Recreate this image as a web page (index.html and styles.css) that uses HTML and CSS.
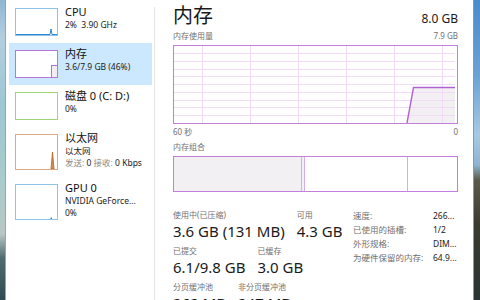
FILE: index.html
```html
<!DOCTYPE html>
<html lang="zh-CN">
<head>
    <meta charset="UTF-8">
    <title>任务管理器 - 内存</title>
    <link rel="stylesheet" href="styles.css">
</head>
<body>
    <div class="desk desk-left"></div>

    <div class="window">
        <aside class="sidebar">
            <div class="item">
                <div class="thumb thumb-cpu">
                    <svg width="41" height="26" viewBox="0 0 41 26">
                        <polyline points="0,25.5 34,25.5 35,20 36,25.5 41,25.5" fill="none" stroke="#2b8ad0" stroke-width="1"/>
                    </svg>
                </div>
                <div class="info">
                    <div class="name">CPU</div>
                    <div class="sub">2%&nbsp; 3.90 GHz</div>
                </div>
            </div>

            <div class="item selected">
                <div class="thumb thumb-mem">
                    <svg width="41" height="26" viewBox="0 0 41 26">
                        <rect x="35.5" y="14.5" width="6" height="12" fill="#f3eef5" stroke="#b56fd0" stroke-width="1"/>
                    </svg>
                </div>
                <div class="info">
                    <div class="name">内存</div>
                    <div class="sub">3.6/7.9 GB (46%)</div>
                </div>
            </div>

            <div class="item">
                <div class="thumb thumb-disk"></div>
                <div class="info">
                    <div class="name">磁盘 0 (C: D:)</div>
                    <div class="sub">0%</div>
                </div>
            </div>

            <div class="item tall">
                <div class="thumb thumb-net">
                    <svg width="41" height="34" viewBox="0 0 41 34">
                        <polygon points="35,34 36.5,17 38,34" fill="#d98a4a" stroke="#b8621c" stroke-width="0.8"/>
                    </svg>
                </div>
                <div class="info">
                    <div class="name">以太网</div>
                    <div class="sub">以太网</div>
                    <div class="sub"><span class="muted">发送:</span> 0 <span class="muted">接收:</span> 0 Kbps</div>
                </div>
            </div>

            <div class="item tall">
                <div class="thumb thumb-gpu">
                    <svg width="41" height="34" viewBox="0 0 41 34">
                        <rect x="34.5" y="32.5" width="1.5" height="1.5" fill="#2b8ad0"/>
                    </svg>
                </div>
                <div class="info">
                    <div class="name">GPU 0</div>
                    <div class="sub">NVIDIA GeForce...</div>
                    <div class="sub">0%</div>
                </div>
            </div>
        </aside>

        <div class="divider"></div>

        <main class="main">
            <div class="head">
                <h1>内存</h1>
                <span class="total">8.0 GB</span>
            </div>

            <div class="row-labels">
                <span>内存使用量</span>
                <span>7.9 GB</span>
            </div>

            <div class="chart">
                <svg width="281" height="77" viewBox="0 0 281 77">
                    <polygon points="233,77 239.5,41.5 281,41.5 281,77" fill="#f2f0f3"/>
                    <g stroke="#f0dcf6" stroke-width="1">
                        <line x1="0" y1="7.5" x2="281" y2="7.5"/>
                        <line x1="0" y1="15.5" x2="281" y2="15.5"/>
                        <line x1="0" y1="23.5" x2="281" y2="23.5"/>
                        <line x1="0" y1="30.5" x2="281" y2="30.5"/>
                        <line x1="0" y1="38.5" x2="281" y2="38.5"/>
                        <line x1="0" y1="46.5" x2="281" y2="46.5"/>
                        <line x1="0" y1="54.5" x2="281" y2="54.5"/>
                        <line x1="0" y1="61.5" x2="281" y2="61.5"/>
                        <line x1="0" y1="69.5" x2="281" y2="69.5"/>
                        <line x1="28.5" y1="0" x2="28.5" y2="77"/>
                        <line x1="76.5" y1="0" x2="76.5" y2="77"/>
                        <line x1="124.5" y1="0" x2="124.5" y2="77"/>
                        <line x1="172.5" y1="0" x2="172.5" y2="77"/>
                        <line x1="220.5" y1="0" x2="220.5" y2="77"/>
                        <line x1="268.5" y1="0" x2="268.5" y2="77"/>
                    </g>
                    <polyline points="233,77 239.5,41.5 281,41.5" fill="none" stroke="#b163d3" stroke-width="1.4"/>
                </svg>
            </div>

            <div class="row-labels axis">
                <span>60 秒</span>
                <span>0</span>
            </div>

            <div class="caption">内存组合</div>

            <div class="compose">
                <div class="seg seg-used"></div>
                <div class="seg seg-mod"></div>
                <div class="seg seg-standby"></div>
                <div class="seg seg-free"></div>
            </div>

            <div class="stats">
                <div class="stats-left">
                    <div class="stat-row">
                        <div class="stat">
                            <div class="label">使用中(已压缩)</div>
                            <div class="value">3.6 GB (131 MB)</div>
                        </div>
                        <div class="stat">
                            <div class="label">可用</div>
                            <div class="value">4.3 GB</div>
                        </div>
                    </div>
                    <div class="stat-row">
                        <div class="stat">
                            <div class="label">已提交</div>
                            <div class="value">6.1/9.8 GB</div>
                        </div>
                        <div class="stat">
                            <div class="label">已缓存</div>
                            <div class="value">3.0 GB</div>
                        </div>
                    </div>
                    <div class="stat-row">
                        <div class="stat">
                            <div class="label">分页缓冲池</div>
                            <div class="value">262 MB</div>
                        </div>
                        <div class="stat">
                            <div class="label">非分页缓冲池</div>
                            <div class="value">247 MB</div>
                        </div>
                    </div>
                </div>

                <div class="stats-right">
                    <span class="key">速度:</span><span class="val">266...</span>
                    <span class="key">已使用的插槽:</span><span class="val">1/2</span>
                    <span class="key">外形规格:</span><span class="val">DIM...</span>
                    <span class="key">为硬件保留的内存:</span><span class="val">64.9...</span>
                </div>
            </div>
        </main>
    </div>

    <div class="desk desk-right"></div>
</body>
</html>
```

FILE: styles.css
```css
body {
    margin: 0;
    padding: 0;
    width: 480px;
    height: 300px;
    overflow: hidden;
    display: flex;
    font-family: "Noto Sans", "Noto Sans CJK SC", sans-serif;
    color: #1a1a1a;
    background-color: #fff;
}

/* desktop peeking out on both sides */
.desk {
    flex: none;
    height: 300px;
}

.desk-left {
    width: 5px;
    background: linear-gradient(to bottom, #8fb6d3 0%, #b3cde0 12%, #9ec7d3 35%, #a9cccb 60%, #b7c7c4 78%, #4f6b70 86%, #2f4a52 100%);
}

.desk-right {
    width: 6px;
    background: linear-gradient(to bottom, #4a8bcb 0%, #6aa2d6 25%, #a8c9e2 45%, #8fb3cf 55%, #5b5a4a 60%, #3a3a30 75%, #2c3434 100%);
}

.window {
    flex: 1;
    display: flex;
    background-color: #fff;
    border-left: 1px solid #9aa3a6;
    border-right: 1px solid #8a96a0;
}

/* left list of devices */
.sidebar {
    width: 143px;
    margin-left: 3px;
    padding-top: 1px;
}

.item {
    display: flex;
    align-items: flex-start;
    padding: 4px 0 7px 6px;
}

.item.selected {
    background-color: #cce8ff;
}

.thumb {
    flex: none;
    width: 41px;
    height: 26px;
    margin-top: 3px;
    background-color: #fff;
    border: 1px solid #8fc2e6;
}

.thumb svg {
    display: block;
}

.item.tall .thumb {
    height: 34px;
}

.thumb-mem {
    border-color: #b877d2;
}

.thumb-disk {
    border-color: #9fd47c;
}

.thumb-net {
    border-color: #daa882;
}

.info {
    margin-left: 7px;
    white-space: nowrap;
}

.name {
    font-size: 11px;
    line-height: 14px;
    color: #111;
}

.sub {
    font-size: 8.5px;
    line-height: 12px;
    color: #222;
}

.muted {
    color: #8a8a8a;
}

.divider {
    flex: none;
    width: 1px;
    margin: 7px 0 0 2px;
    background-color: #e6e6e6;
}

/* memory details */
.main {
    flex: 1;
    padding: 2px 15px 0 18px;
}

.head {
    display: flex;
    justify-content: space-between;
    align-items: baseline;
}

.head h1 {
    margin: 0;
    font-size: 20px;
    font-weight: normal;
    line-height: 28px;
}

.total {
    font-size: 12px;
}

.row-labels {
    display: flex;
    justify-content: space-between;
    font-size: 8px;
    line-height: 11px;
    color: #707070;
    margin-bottom: 4px;
}

.row-labels.axis {
    margin: 2px 0 0 0;
}

.caption {
    font-size: 8px;
    line-height: 11px;
    color: #707070;
    margin-top: 4px;
}

.chart {
    border: 1px solid #c47fdc;
    height: 77px;
}

.chart svg {
    display: block;
}

.compose {
    display: flex;
    height: 34px;
    margin-top: 4px;
    border: 1px solid #c47fdc;
}

.seg {
    border-right: 1px solid #d8ade7;
}

.seg-used {
    width: 127px;
    background-color: #f2f0f3;
}

.seg-mod {
    width: 2px;
    background-color: #f2f0f3;
}

.seg-standby {
    width: 102px;
}

.seg-free {
    flex: 1;
    border-right: none;
}

.stats {
    display: flex;
    margin-top: 17px;
}

.stats-left {
    flex: 1;
}

.stat-row {
    display: flex;
    gap: 12px;
    margin-bottom: 4px;
}

.label {
    font-size: 8px;
    line-height: 12px;
    color: #707070;
    white-space: nowrap;
}

.value {
    font-size: 15px;
    line-height: 20px;
    white-space: nowrap;
}

.stats-right {
    width: 105px;
    display: grid;
    grid-template-columns: 80px 25px;
    grid-auto-rows: 14px;
    align-content: start;
    font-size: 8.5px;
    line-height: 14px;
    white-space: nowrap;
}

.key {
    color: #707070;
}

.val {
    color: #222;
}
```
